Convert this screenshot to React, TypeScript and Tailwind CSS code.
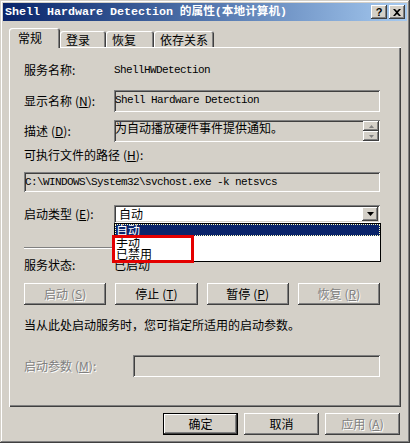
import React from "react"

const cjk = "font-['Noto_Sans_CJK_SC',sans-serif] text-[12px] leading-[12px]"
const mono = "font-['Liberation_Mono','Noto_Sans_CJK_SC',monospace] text-[11px] leading-[12px] tracking-[-0.6px] whitespace-pre"
const raised = "shadow-[inset_-1px_-1px_#404040,inset_1px_1px_#fff,inset_-2px_-2px_#808080]"
const defBtn = "shadow-[inset_0_0_0_1px_#000,inset_-2px_-2px_#404040,inset_2px_2px_#fff,inset_-3px_-3px_#808080]"
const sunken = "shadow-[inset_1px_1px_#808080,inset_-1px_-1px_#fff,inset_2px_2px_#404040,inset_-2px_-2px_#d4d0c8]"
const dim = "text-[#808080] [text-shadow:1px_1px_0_#fff]"

function Label({ t, k }: { t: string; k?: string }) {
  return (
    <span>
      {t}
      {k ? (
        <>
          <span className="ml-[3px]">(</span>
          <u>{k}</u>)
        </>
      ) : null}
      :
    </span>
  )
}

function Btn({ t, k, off, def, w }: { t: string; k?: string; off?: boolean; def?: boolean; w: string }) {
  return (
    <button
      type="button"
      className={`${w} h-[22px] flex items-center justify-center bg-[#d4d0c8] ${cjk} ${def ? defBtn : raised} ${off ? dim : "text-black"}`}
    >
      {t}
      {k ? (
        <>
          <span className="ml-[3px]">(</span>
          <u>{k}</u>)
        </>
      ) : null}
    </button>
  )
}

function Tab({ t, w, on }: { t: string; w: string; on?: boolean }) {
  return on ? (
    <div className={`${w} h-[20px] mb-[-1px] pt-[4px] pl-[9px] bg-[#d4d0c8] rounded-t-[3px] relative z-10 shadow-[inset_1px_1px_#fff,inset_-1px_0_#404040,inset_-2px_0_#808080] ${cjk}`}>
      {t}
    </div>
  ) : (
    <div className={`${w} h-[16px] pt-[3px] pl-[6px] rounded-t-[3px] shadow-[inset_1px_1px_#fff,inset_-1px_0_#404040,inset_-2px_0_#808080] ${cjk}`}>
      {t}
    </div>
  )
}

export default function App() {
  return (
    <div className="w-[410px] h-[443px] p-[3px] bg-[#d4d0c8] text-black flex flex-col shadow-[inset_-1px_-1px_#404040,inset_1px_1px_#d4d0c8,inset_-2px_-2px_#808080,inset_2px_2px_#fff] overflow-hidden">
      {/* title bar */}
      <div className="h-[18px] flex items-center pl-[2px] pr-[2px] bg-linear-to-r from-[#0a246a] to-[#a6caf0]">
        <span className="font-['Liberation_Mono','Noto_Sans_CJK_SC',monospace] font-bold text-[11.67px] leading-[12px] text-white whitespace-pre">
          Shell Hardware Detection 的属性(本地计算机)
        </span>
        <div className="ml-auto flex gap-[2px]">
          <div className={`w-[16px] h-[14px] bg-[#d4d0c8] flex items-center justify-center font-['Liberation_Sans',sans-serif] font-bold text-[11px] leading-[11px] ${raised}`}>
            ?
          </div>
          <div className={`w-[16px] h-[14px] bg-[#d4d0c8] flex items-center justify-center ${raised}`}>
            <svg width="8" height="7" viewBox="0 0 8 7">
              <path d="M0 0h2l2 2 2-2h2L5 3.5 8 7H6L4 5 2 7H0l3-3.5z" fill="#000" />
            </svg>
          </div>
        </div>
      </div>

      {/* tabs */}
      <div className="mt-[7px] ml-[6px] h-[19px] flex items-end relative z-10">
        <Tab t="常规" w="w-[51px]" on />
        <Tab t="登录" w="w-[46px]" />
        <Tab t="恢复" w="w-[48px]" />
        <Tab t="依存关系" w="w-[60px]" />
      </div>

      {/* panel */}
      <div className={`ml-[6px] w-[392px] h-[360px] pl-[15px] pr-[21px] pt-[17px] flex flex-col shadow-[inset_1px_1px_#fff,inset_-1px_-1px_#404040,inset_-2px_-2px_#808080] ${cjk}`}>
        <div className="flex h-[12px]">
          <span className="w-[90px]">
            <Label t="服务名称" />
          </span>
          <span className={mono}>ShellHWDetection</span>
        </div>

        <div className="mt-[14px] flex items-center">
          <span className="w-[90px]">
            <Label t="显示名称" k="N" />
          </span>
          <div className={`flex-1 h-[22px] pt-[2px] pl-[1px] ${sunken}`}>
            <span className={mono}>Shell Hardware Detection</span>
          </div>
        </div>

        <div className="mt-[8px] flex items-center">
          <span className="w-[90px]">
            <Label t="描述" k="D" />
          </span>
          <div className={`relative flex-1 h-[22px] pt-[2px] pl-[1px] ${sunken}`}>
            为自动播放硬件事件提供通知。
            <div className="absolute right-[1px] top-[1px] flex flex-col">
              <div className={`w-[16px] h-[10px] flex items-center justify-center bg-[#d4d0c8] ${raised}`}>
                <svg width="5" height="3" viewBox="0 0 5 3">
                  <path d="M2.5 0L5 3H0z" fill="#808080" />
                </svg>
              </div>
              <div className={`w-[16px] h-[10px] flex items-center justify-center bg-[#d4d0c8] ${raised}`}>
                <svg width="5" height="3" viewBox="0 0 5 3">
                  <path d="M0 0h5L2.5 3z" fill="#808080" />
                </svg>
              </div>
            </div>
          </div>
        </div>

        <div className="mt-[7px] h-[12px]">
          <Label t="可执行文件的路径" k="H" />
        </div>

        <div className={`mt-[11px] h-[20px] pt-[2px] pl-[1px] ${sunken}`}>
          <span className={mono}>C:\WINDOWS\System32\svchost.exe -k netsvcs</span>
        </div>

        <div className="mt-[13px] flex items-center">
          <span className="w-[90px]">
            <Label t="启动类型" k="E" />
          </span>
          <div className={`relative flex-1 h-[18px] bg-white pl-[5px] pt-[3px] ${sunken}`}>
            自动
            <div className={`absolute right-[2px] top-[2px] w-[16px] h-[14px] bg-[#d4d0c8] flex items-center justify-center ${raised}`}>
              <svg width="7" height="4" viewBox="0 0 7 4">
                <path d="M0 0h7L3.5 4z" fill="#000" />
              </svg>
            </div>
            {/* dropdown list */}
            <div className="absolute left-0 -right-[1px] top-full h-[39px] bg-white border border-black z-20 flex flex-col">
              <div className="h-[12px] bg-[#0a246a] text-white pl-[1px] outline outline-1 outline-dotted outline-[#ffffc0] -outline-offset-1">
                自动
              </div>
              <div className="h-[12px] pl-[1px]">手动</div>
              <div className="h-[12px] pl-[1px]">已禁用</div>
            </div>
            <div className="absolute -left-[2px] top-[30px] w-[82px] h-[28px] border-[3px] border-[#e40000] z-30" />
          </div>
        </div>

        <div className="mt-[24px] h-[2px] border-t border-[#808080] border-b border-b-white" />

        <div className="mt-[10px] flex h-[12px]">
          <span className="w-[90px]">
            <Label t="服务状态" />
          </span>
          <span>已启动</span>
        </div>

        <div className="mt-[12px] grid grid-cols-4 gap-[9px]">
          <Btn t="启动" k="S" off w="w-full" />
          <Btn t="停止" k="T" w="w-full" />
          <Btn t="暂停" k="P" w="w-full" />
          <Btn t="恢复" k="R" off w="w-full" />
        </div>

        <div className="mt-[14px] h-[12px]">当从此处启动服务时，您可指定所适用的启动参数。</div>

        <div className="mt-[24px] flex items-center">
          <span className={`w-[109px] ${dim}`}>
            <Label t="启动参数" k="M" />
          </span>
          <div className={`flex-1 h-[22px] ${sunken}`} />
        </div>
      </div>

      {/* bottom buttons */}
      <div className="mt-[6px] pr-[7px] flex justify-end gap-[6px]">
        <Btn t="确定" def w="w-[75px]" />
        <Btn t="取消" w="w-[75px]" />
        <Btn t="应用" k="A" off w="w-[75px]" />
      </div>
    </div>
  )
}
